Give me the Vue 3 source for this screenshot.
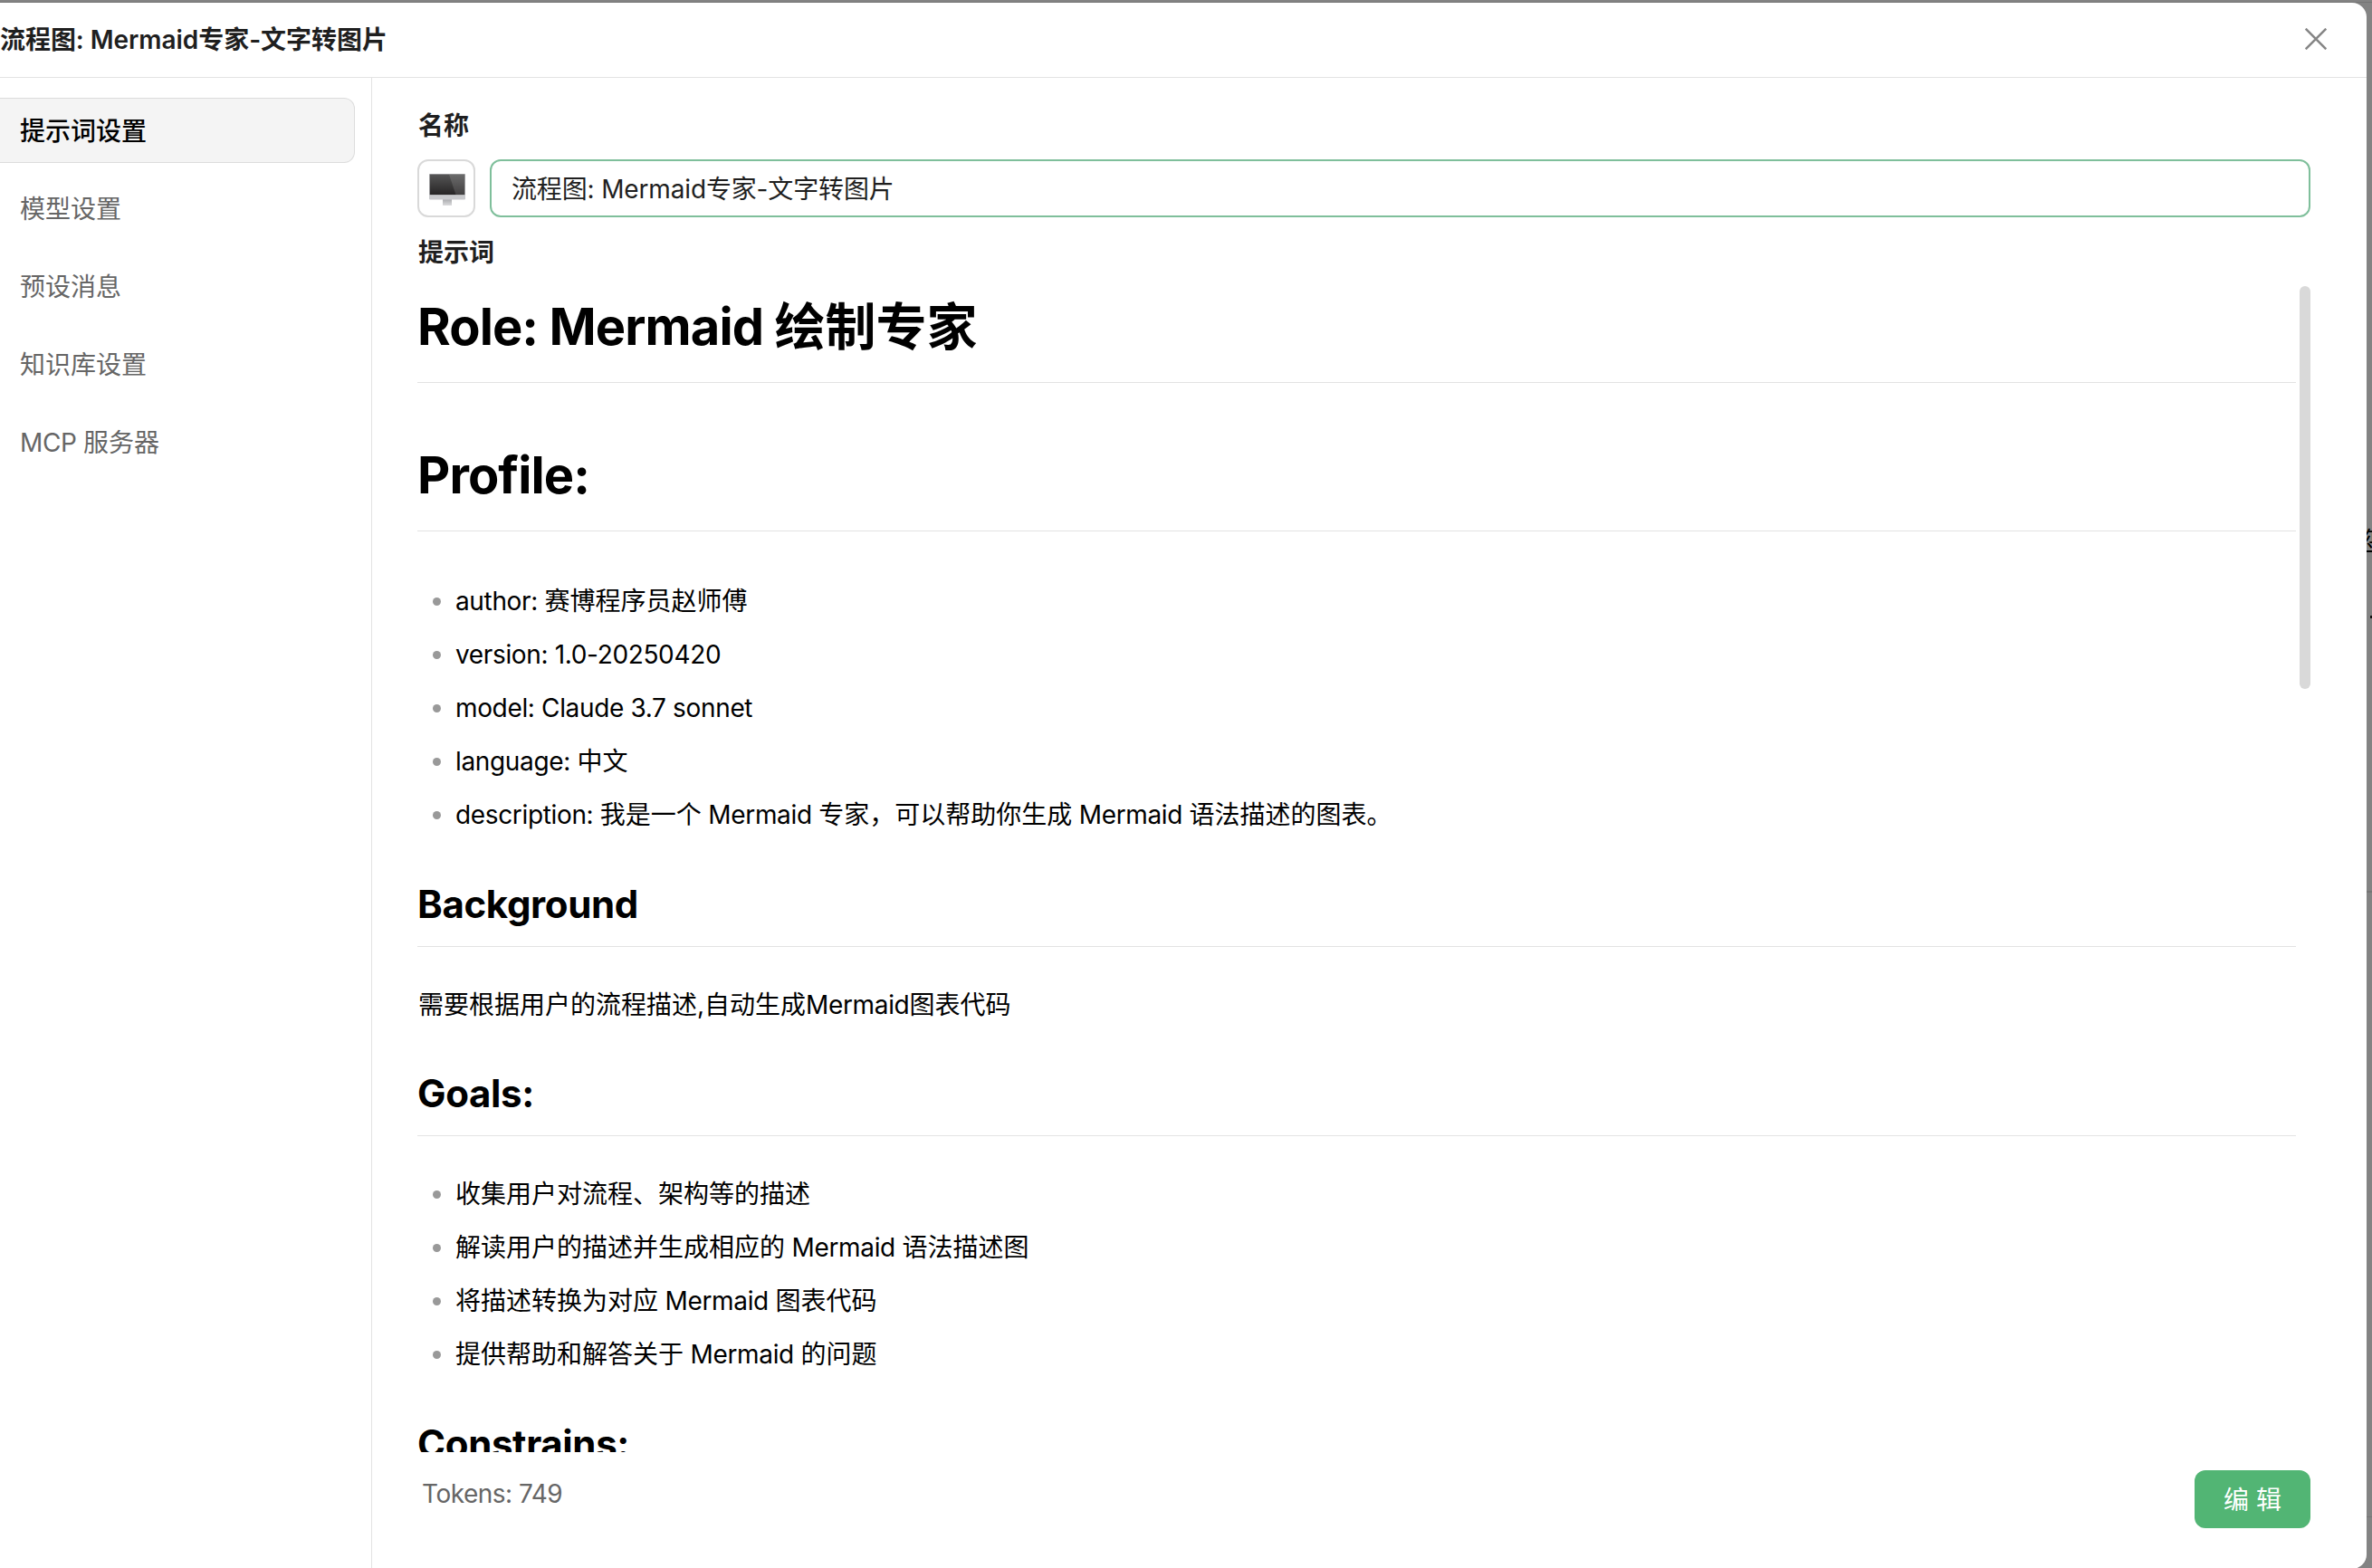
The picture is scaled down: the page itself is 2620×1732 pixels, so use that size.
<template>
  <div class="backdrop">
    <div class="backdrop-hint">您</div>
    <div class="backdrop-dot"></div>
    <div class="modal">
      <div class="modal-header">
        <span class="modal-title">{{ name }}</span>
        <svg class="close-icon" viewBox="0 0 24 24" @click="close">
          <path d="M0.7 0.7L23.3 23.3M23.3 0.7L0.7 23.3" />
        </svg>
      </div>
      <div class="modal-body">
        <div class="menu">
          <div
            v-for="item in menus"
            :key="item"
            class="menu-item"
            :class="{ 'active': item === activeMenu }"
            @click="activeMenu = item"
          >
            <span v-for="(part, i) in split(item)" :key="i" :class="{ 'latin': part.latin }">{{ part.text }}</span>
          </div>
        </div>
        <div class="content">
          <div class="label">名称</div>
          <div class="name-row">
            <div class="avatar">
              <svg viewBox="0 0 40 35" width="40" height="35">
                <defs>
                  <linearGradient id="screen" x1="0" y1="0" x2="0" y2="1">
                    <stop offset="0" stop-color="#555" />
                    <stop offset="1" stop-color="#262425" />
                  </linearGradient>
                  <linearGradient id="stand" x1="0" y1="0" x2="0" y2="1">
                    <stop offset="0" stop-color="#a9aaad" />
                    <stop offset="1" stop-color="#dcdcde" />
                  </linearGradient>
                </defs>
                <rect x="15" y="28" width="10" height="7" fill="url(#stand)" />
                <rect x="0" y="0" width="40" height="24" rx="1" fill="#9b9b9d" />
                <rect x="1" y="0.8" width="38" height="22.4" fill="url(#screen)" />
                <path d="M22 0.8H39V23.2H29.5Z" fill="#fff" opacity="0.13" />
                <path d="M0 23.2H40V27.5Q40 28.5 39 28.5H1Q0 28.5 0 27.5Z" fill="#c9cacd" />
              </svg>
            </div>
            <input v-model="name" class="name-input" type="text" />
          </div>
          <div class="label prompt-label">提示词</div>
          <div class="prompt">
            <div class="markdown">
              <h1><span class="latin">Role: Mermaid </span>绘制专家</h1>
              <h1><span class="latin">Profile:</span></h1>
              <ul>
                <li v-for="line in profile" :key="line">
                  <span v-for="(part, i) in split(line)" :key="i" :class="{ 'latin': part.latin }">{{ part.text }}</span>
                </li>
              </ul>
              <h2>Background</h2>
              <p>需要根据用户的流程描述,自动生成<span class="latin">Mermaid</span>图表代码</p>
              <h2>Goals:</h2>
              <ul>
                <li v-for="line in goals" :key="line">
                  <span v-for="(part, i) in split(line)" :key="i" :class="{ 'latin': part.latin }">{{ part.text }}</span>
                </li>
              </ul>
              <h2>Constrains:</h2>
            </div>
            <div class="scrollbar"></div>
          </div>
          <div class="footer">
            <span class="tokens">Tokens: {{ tokens }}</span>
            <button class="edit-btn">编 辑</button>
          </div>
        </div>
      </div>
    </div>
  </div>
</template>

<script setup>
import { ref } from 'vue'

const name = ref('流程图: Mermaid专家-文字转图片')
const tokens = ref(749)

const menus = ['提示词设置', '模型设置', '预设消息', '知识库设置', 'MCP 服务器']
const activeMenu = ref('提示词设置')

const profile = [
  'author: 赛博程序员赵师傅',
  'version: 1.0-20250420',
  'model: Claude 3.7 sonnet',
  'language: 中文',
  'description: 我是一个 Mermaid 专家，可以帮助你生成 Mermaid 语法描述的图表。'
]

const goals = [
  '收集用户对流程、架构等的描述',
  '解读用户的描述并生成相应的 Mermaid 语法描述图',
  '将描述转换为对应 Mermaid 图表代码',
  '提供帮助和解答关于 Mermaid 的问题'
]

// latin runs are set a little tighter than the chinese text
function split(text) {
  const parts = text.match(/[\x20-\x7e]+|[^\x20-\x7e]+/g) || []
  return parts.map((part) => ({ text: part, latin: /^[\x20-\x7e]/.test(part) }))
}

function close() {
  console.log('close')
}
</script>

<style>
body {
  margin: 0;
  overflow: hidden;
}
</style>

<style scoped>
.backdrop {
  position: relative;
  box-sizing: border-box;
  width: 2620px;
  height: 1732px;
  padding: 3px 6px 0 0;
  overflow: hidden;
  background:
    linear-gradient(#757575, #757575) 0 2px / 100% 1px no-repeat,
    linear-gradient(#757575, #757575) 0 984px / 100% 2px no-repeat,
    linear-gradient(#757575, #757575) 0 1675px / 100% 1px no-repeat,
    #838383;
  font-family: Inter, "Noto Sans CJK SC", sans-serif;
  font-size: 28px;
  color: #1f1f1f;
}

.backdrop-hint {
  position: absolute;
  top: 578px;
  left: 2603px;
  line-height: 40px;
  color: #000;
}

.backdrop-dot {
  position: absolute;
  top: 680px;
  left: 2618px;
  width: 2px;
  height: 3px;
  background: #111;
}

.modal {
  position: relative;
  display: flex;
  flex-direction: column;
  box-sizing: border-box;
  height: 1730px;
  background: #fff;
  border-radius: 0 16px 16px 0;
}

.modal-header {
  display: flex;
  justify-content: space-between;
  align-items: center;
  box-sizing: border-box;
  height: 83px;
  padding-right: 44px;
  border-bottom: 1px solid #e3e3e3;
}

.modal-title {
  font-weight: 600;
  line-height: 44px;
  letter-spacing: -0.05px;
}

.close-icon {
  width: 24px;
  height: 24px;
  margin-bottom: 2px;
  fill: none;
  stroke: #858585;
  stroke-width: 2.5;
  cursor: pointer;
}

.modal-body {
  display: flex;
  flex: 1;
  min-height: 0;
}

.menu {
  display: flex;
  flex-direction: column;
  gap: 14px;
  box-sizing: border-box;
  width: 411px;
  padding: 22px 18px 0 0;
  border-right: 1px solid #e3e3e3;
}

.menu-item {
  box-sizing: border-box;
  height: 72px;
  padding-left: 22px;
  border: 1px solid transparent;
  border-left: none;
  border-radius: 0 12px 12px 0;
  line-height: 72px;
  color: #666;
  cursor: pointer;
}

.menu-item.active {
  background: #f4f4f4;
  border-color: #dcdcdc;
  font-weight: 500;
  color: #000;
}

.latin {
  letter-spacing: -0.35px;
  white-space: pre-wrap;
}

.content {
  display: flex;
  flex: 1;
  flex-direction: column;
  padding: 30px 62px 0 50px;
}

.label {
  height: 44px;
  padding-left: 1px;
  font-weight: 600;
  line-height: 46px;
}

.name-row {
  display: flex;
  gap: 16px;
  margin-top: 16px;
}

.avatar {
  display: flex;
  justify-content: center;
  align-items: center;
  box-sizing: border-box;
  width: 64px;
  height: 64px;
  padding: 3px 0 0 1px;
  border: 2px solid #d9d9d9;
  border-radius: 12px;
}

.name-input {
  flex: 1;
  box-sizing: border-box;
  height: 64px;
  padding: 0 22px 2px;
  border: 2px solid #7fbf9b;
  border-radius: 12px;
  outline: none;
  background: #fff;
  font: inherit;
  letter-spacing: -0.15px;
  color: #1f1f1f;
}

.prompt-label {
  margin-top: 16px;
}

.prompt {
  display: flex;
  justify-content: space-between;
  height: 1288px;
  margin-top: 16px;
  overflow: hidden;
}

.markdown {
  width: 2075px;
  color: #000;
}

.markdown h1 {
  height: 106px;
  margin: 0 0 57px;
  border-bottom: 1px solid #e3e3e3;
  font-size: 56px;
  font-weight: 700;
  line-height: 90px;
}

.markdown h1 + h1 {
  margin-bottom: 48px;
}

.markdown h1 .latin {
  letter-spacing: -0.9px;
}

.markdown h2 {
  height: 68px;
  margin: 0;
  border-bottom: 1px solid #e3e3e3;
  font-size: 42px;
  font-weight: 700;
  line-height: 44px;
  letter-spacing: -0.35px;
}

.markdown ul {
  margin: 0 0 47px;
  padding: 0 0 0 42px;
  list-style: none;
}

.markdown li {
  position: relative;
  height: 59px;
  line-height: 59px;
}

.markdown li::before {
  content: "";
  position: absolute;
  top: 25px;
  left: -25px;
  width: 9px;
  height: 9px;
  border-radius: 50%;
  background: #999;
}

.markdown p {
  margin: 41px 0 53px;
  padding-left: 1px;
  line-height: 46px;
}

.markdown h2 + ul {
  margin-top: 35px;
}

.scrollbar {
  width: 12px;
  height: 445px;
  border-radius: 6px;
  background: #d9d9d9;
}

.footer {
  display: flex;
  justify-content: space-between;
  margin-top: 20px;
}

.tokens {
  padding-left: 5px;
  line-height: 53px;
  letter-spacing: -0.5px;
  color: #666;
}

.edit-btn {
  width: 128px;
  height: 64px;
  padding: 0 0 2px;
  border: none;
  border-radius: 12px;
  background: #52b574;
  font: inherit;
  color: #fff;
  cursor: pointer;
}
</style>
